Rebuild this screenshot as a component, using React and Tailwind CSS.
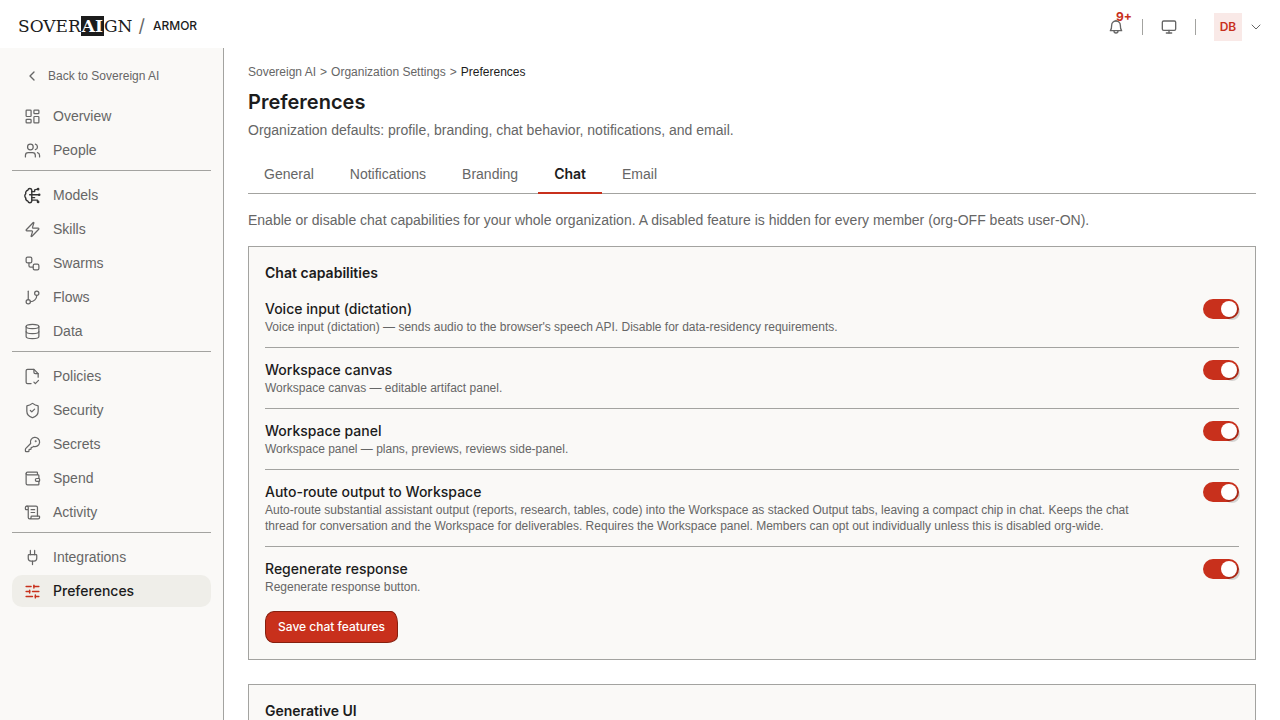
import { useState } from "react";
import {
  Monitor, ChevronDown, ChevronLeft, LayoutDashboard, Users, Zap, Workflow,
  GitBranch, Database, ShieldCheck, KeyRound, Wallet, ScrollText, Plug, SlidersHorizontal,
} from "lucide-react";

function Glyph({ className, strokeWidth, children }) {
  return (
    <svg viewBox="0 0 24 24" fill="none" stroke="currentColor" strokeWidth={strokeWidth} strokeLinecap="round" strokeLinejoin="round" className={className} aria-hidden="true">
      {children}
    </svg>
  );
}

function FilePolicy(props) {
  return (
    <Glyph {...props}>
      <path d="M10 22H5a2 2 0 0 1-2-2V4a2 2 0 0 1 2-2h9l6 6v5" />
      <path d="M14 2v4a2 2 0 0 0 2 2h4" />
      <path d="m14 20 2 2 4.500-4.500" />
    </Glyph>
  );
}

function BrainModel({ className }) {
  return (
    <Glyph className={className + " text-[#333]"} strokeWidth={2}>
      <path d="M11 4.500A2.800 2.800 0 0 0 5.500 4.500a4 4 0 0 0-3 5 4 4 0 0 0 0 6 4 4 0 0 0 3 4.500 2.800 2.800 0 0 0 5.500 0z" />
      <path d="M11 6.500h4V4l4-1" />
      <path d="M8 11h13" />
      <path d="M11 15h4" />
      <path d="M11 18.500h8V21" />
      <circle cx="20" cy="3" r="0.8" />
      <circle cx="21.500" cy="11" r="0.8" />
      <circle cx="20" cy="21" r="0.8" />
    </Glyph>
  );
}

function BellGlyph({ className }) {
  return (
    <Glyph className={className} strokeWidth={2}>
      <path d="M3.500 17.500h17c-1.500-1.500-2-3-2-8a6.500 6.500 0 0 0-13 0c0 5-.5 6.500-2 8Z" />
      <path d="M9 18a3 3 0 0 0 6 0" />
      <path d="M12 2v1" />
    </Glyph>
  );
}

const groups = [
  [["Overview", LayoutDashboard], ["People", Users]],
  [["Models", BrainModel], ["Skills", Zap], ["Swarms", Workflow], ["Flows", GitBranch], ["Data", Database]],
  [["Policies", FilePolicy], ["Security", ShieldCheck], ["Secrets", KeyRound], ["Spend", Wallet], ["Activity", ScrollText]],
  [["Integrations", Plug], ["Preferences", SlidersHorizontal]],
];

const features = [
  ["voice", "Voice input (dictation)", "Voice input (dictation) — sends audio to the browser's speech API. Disable for data-residency requirements."],
  ["canvas", "Workspace canvas", "Workspace canvas — editable artifact panel."],
  ["panel", "Workspace panel", "Workspace panel — plans, previews, reviews side-panel."],
  ["route", "Auto-route output to Workspace", "Auto-route substantial assistant output (reports, research, tables, code) into the Workspace as stacked Output tabs, leaving a compact chip in chat. Keeps the chat thread for conversation and the Workspace for deliverables. Requires the Workspace panel. Members can opt out individually unless this is disabled org-wide."],
  ["regen", "Regenerate response", "Regenerate response button."],
];

const tabs = ["General", "Notifications", "Branding", "Chat", "Email"];

function Header() {
  return (
    <header className="flex h-12 shrink-0 items-center justify-between px-4">
      <div className="flex items-center pt-1">
        <a href="#" aria-label="Sovereign" className="flex items-center pl-0.5 font-['DejaVu_Serif',serif] text-[17px] leading-5 text-[#1c1c1c]">
          <span>SOVER</span>
          <span className="bg-[#1c1c1c] px-px font-bold text-white">AI</span>
          <span>GN</span>
        </a>
        <span className="ml-1.5 font-[Inter,sans-serif] text-lg leading-5 text-[#666]">/</span>
        <span className="ml-2 font-[Inter,sans-serif] text-xs font-medium">ARMOR</span>
      </div>
      <div className="flex items-center gap-[18px] pt-1.5 font-[Inter,sans-serif] text-[#666]">
        <button type="button" aria-label="Notifications" className="relative">
          <BellGlyph className="size-4" />
          <span className="absolute -top-2.5 left-2 text-xs font-bold text-[#c8301c]">9+</span>
        </button>
        <span className="h-4 w-px bg-[#a3a3a0]" />
        <button type="button" aria-label="Display">
          <Monitor className="size-4" strokeWidth={2} />
        </button>
        <span className="h-4 w-px bg-[#a3a3a0]" />
        <button type="button" className="flex items-center gap-1.5">
          <span className="flex size-7 items-center justify-center bg-[#f9e9e7] text-xs font-semibold text-[#c8301c]">DB</span>
          <ChevronDown className="size-4" strokeWidth={1.5} />
        </button>
      </div>
    </header>
  );
}

function Sidebar() {
  return (
    <aside className="w-56 shrink-0 border-r border-[#a3a3a0] bg-[#faf9f7] px-3 pt-4 text-[#666]">
      <a href="#" className="mb-2 flex h-6 items-center gap-2 px-3 text-xs">
        <ChevronLeft className="size-4" strokeWidth={2} />
        Back to Sovereign AI
      </a>
      <nav className="pt-1">
        {groups.map((items, g) => (
          <ul key={g} className={g ? "mt-1 flex flex-col gap-0.5 border-t border-[#a3a3a0] pt-2" : "flex flex-col gap-0.5"}>
            {items.map(([name, Icon]) => {
              const active = name === "Preferences";
              return (
                <li key={name}>
                  <a href="#" aria-current={active ? "page" : undefined}
                    className={active
                      ? "flex h-8 items-center gap-3 rounded-[10px] bg-[#efeee9] px-3 font-[Inter,sans-serif] text-sm font-medium text-[#1c1c1c]"
                      : "flex h-8 items-center gap-3 px-3 text-sm"}>
                    <Icon className={active ? "size-[17px] text-[#c8301c]" : "size-[17px]"} strokeWidth={active ? 2 : 1.75} />
                    {name}
                  </a>
                </li>
              );
            })}
          </ul>
        ))}
      </nav>
    </aside>
  );
}

function Feature({ id, label, text, last }) {
  const [on, setOn] = useState(true);
  return (
    <div className={last ? "flex items-start justify-between gap-10 py-3" : "flex items-start justify-between gap-10 border-b border-[#a3a3a0] py-3"}>
      <div>
        <label htmlFor={id} className="block font-[Inter,sans-serif] text-sm font-medium">{label}</label>
        <p className="text-xs text-[#666]">{text}</p>
      </div>
      <button id={id} type="button" role="switch" aria-checked={on} onClick={() => setOn(!on)}
        className={on ? "flex h-5 w-9 shrink-0 items-center justify-end rounded-full bg-[#c8301c] p-0.5" : "flex h-5 w-9 shrink-0 items-center rounded-full bg-[#a3a3a0] p-0.5"}>
        <span className="size-4 rounded-full bg-white shadow-[3px_3px_0_rgba(0,0,0,0.15)]" />
      </button>
    </div>
  );
}

export default function App() {
  return (
    <div className="flex h-screen flex-col overflow-hidden bg-white font-['Liberation_Sans',Arial,sans-serif] text-[#1c1c1c]">
      <Header />
      <div className="flex min-h-0 flex-1">
        <Sidebar />
        <main className="min-w-0 flex-1 overflow-hidden px-6 pt-4">
          <nav aria-label="Breadcrumb" className="flex gap-1 text-xs text-[#666]">
            <a href="#">Sovereign AI</a>
            <span>&gt;</span>
            <a href="#">Organization Settings</a>
            <span>&gt;</span>
            <span className="text-[#1c1c1c]">Preferences</span>
          </nav>
          <h1 className="mt-2 font-[Inter,sans-serif] text-xl leading-7 font-semibold">Preferences</h1>
          <p className="mt-1 text-sm text-[#666]">Organization defaults: profile, branding, chat behavior, notifications, and email.</p>
          <div role="tablist" className="mt-4 flex gap-1 border-b border-[#a3a3a0]">
            {tabs.map((t) => (
              <button key={t} type="button" role="tab" aria-selected={t === "Chat"}
                className={t === "Chat"
                  ? "-mb-px border-b-2 border-[#c8301c] px-4 py-2 font-[Inter,sans-serif] text-sm font-semibold"
                  : "-mb-px border-b-2 border-transparent px-4 py-2 text-sm text-[#666]"}>
                {t}
              </button>
            ))}
          </div>
          <p className="mt-4 text-sm text-[#666]">Enable or disable chat capabilities for your whole organization. A disabled feature is hidden for every member (org-OFF beats user-ON).</p>
          <section className="mt-4 border border-[#a3a3a0] bg-[#faf9f7] p-4">
            <h2 className="mb-1 font-[Inter,sans-serif] text-sm font-semibold">Chat capabilities</h2>
            {features.map(([id, label, text], i) => (
              <Feature key={id} id={id} label={label} text={text} last={i === features.length - 1} />
            ))}
            <button type="button" className="mt-1 h-8 rounded-[9px_7px_11px_8px/10px_12px_7px_10px] border border-[#86200f] bg-[#c8301c] px-3 font-[Inter,sans-serif] text-xs font-medium text-white">
              Save chat features
            </button>
          </section>
          <section className="mt-6 h-40 border border-[#a3a3a0] bg-[#faf9f7] p-4">
            <h2 className="font-[Inter,sans-serif] text-sm font-semibold">Generative UI</h2>
          </section>
        </main>
      </div>
    </div>
  );
}
